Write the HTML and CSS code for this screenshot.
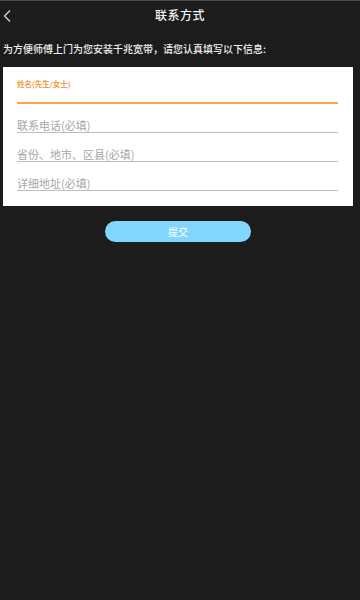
FILE: index.html
```html
<!DOCTYPE html>
<html lang="zh">
<head>
<meta charset="utf-8">
<title>联系方式</title>
<link rel="stylesheet" href="styles.css">
</head>
<body>
<div class="page">
  <header class="topbar">
    <div class="back">
      <svg width="14" height="14" viewBox="0 0 14 14"><path d="M8 1.5 L2.5 7 L8 12.5" fill="none" stroke="#d8d8d8" stroke-width="1.3"/></svg>
    </div>
    <div class="title">联系方式</div>
    <div class="spacer"></div>
  </header>
  <p class="intro">为方便师傅上门为您安装千兆宽带，请您认真填写以下信息:</p>
  <form class="card">
    <div class="field active">
      <div class="label">姓名(先生/女士)</div>
      <div class="input"></div>
    </div>
    <div class="field"><div class="placeholder">联系电话(必填)</div></div>
    <div class="field"><div class="placeholder">省份、地市、区县(必填)</div></div>
    <div class="field"><div class="placeholder">详细地址(必填)</div></div>
  </form>
  <div class="actions">
    <div class="submit">提交</div>
  </div>
</div>
</body>
</html>
```
FILE: styles.css
```css
html, body {
  margin: 0;
  padding: 0;
  background: #1c1c1c;
}
body {
  font-family: "Noto Sans CJK SC", "Noto Sans", sans-serif;
  width: 360px;
  height: 600px;
  overflow: hidden;
}
.page {
  border-top: 1px solid #4a4a4a;
  min-height: 599px;
}
.topbar {
  height: 27px;
  display: grid;
  grid-template-columns: 40px 1fr 40px;
  align-items: center;
}
.back {
  display: flex;
  align-items: center;
  padding-left: 2px;
  height: 27px;
  padding-top: 1px;
}
.title {
  text-align: center;
  color: #f2f2f2;
  font-size: 12px;
  line-height: 14px;
  letter-spacing: 0.5px;
  font-weight: 500;
}
.intro {
  margin: 14px 0 11px 3px;
  font-size: 10px;
  line-height: 14px;
  color: #f0f0f0;
  font-weight: 500;
}
.card {
  margin: 0 7px 0 3px;
  background: #ffffff;
  padding: 12px 15px 15px 14px;
}
.field {
  padding-top: 14px;
  border-bottom: 1px solid #bdbdbd;
}
.field.active {
  padding-top: 0;
  border-bottom: 2px solid #f7a34f;
}
.label {
  font-size: 7.5px;
  line-height: 10px;
  color: #f29d45;
  font-weight: 700;
}
.input {
  height: 13px;
}
.placeholder {
  font-size: 11px;
  line-height: 14px;
  color: #a6a6a6;
}
.actions {
  margin: 15px 7px 0 3px;
  display: flex;
  justify-content: center;
}
.submit {
  width: 146px;
  height: 21px;
  border-radius: 11px;
  background: #80d6fc;
  color: #ffffff;
  font-size: 10px;
  line-height: 21px;
  text-align: center;
}
```
